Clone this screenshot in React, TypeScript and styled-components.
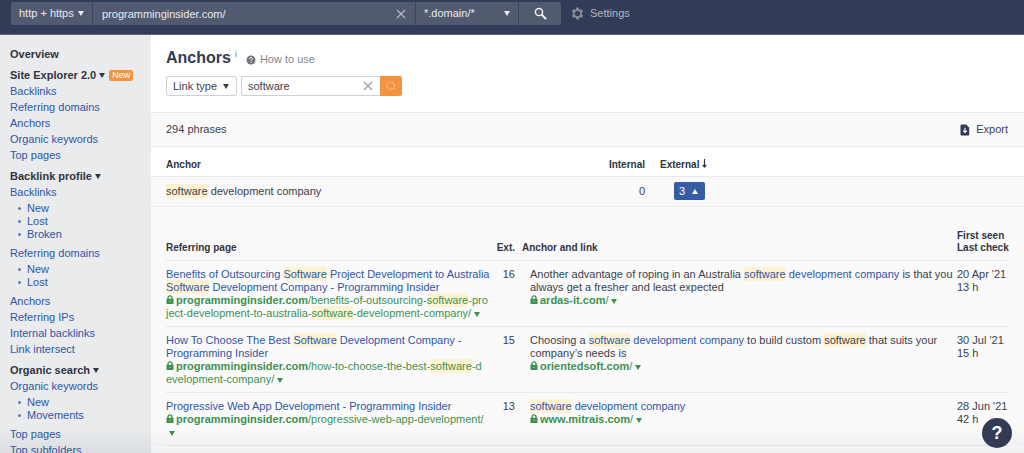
import React from "react";
import styled, { createGlobalStyle } from "styled-components";

const Global = createGlobalStyle`
  *, *::before, *::after { box-sizing: border-box; }
  body {
    margin: 0;
    font-family: "Liberation Sans", Arial, Helvetica, sans-serif;
    font-size: 11px;
    line-height: 13px;
    color: #3b3f4a;
    background: #ffffff;
  }
  button, input, select { font: inherit; color: inherit; margin: 0; }
`;

const Shell = styled.div`
  height: 100vh;
  overflow: hidden;
  display: flex;
  flex-direction: column;
`;

const TopBar = styled.header`
  flex: none;
  display: flex;
  align-items: flex-start;
  height: 35px;
  padding: 2px 11px 0;
  background: #333c56;
  border-bottom: 1px solid #5b6173;
  color: #e8e9ee;
`;

const UrlForm = styled.form`
  display: flex;
  gap: 1px;
  height: 23px;
  width: 550px;
  background: #3d455d;
  border-radius: 2px;
  overflow: hidden;
`;

const SelectBox = styled.span<{ $width: number }>`
  display: grid;
  align-items: center;
  flex: none;
  width: ${(p) => p.$width}px;
  height: 100%;
  > * { grid-area: 1 / 1; }
  > svg { justify-self: end; margin-right: 8px; pointer-events: none; }
`;

const TopSelect = styled.select`
  appearance: none;
  width: 100%;
  height: 100%;
  padding: 0 8px;
  border: 0;
  border-radius: 0;
  background: #525a70;
  color: #e8e9ee;
`;

const InputWrap = styled.span`
  flex: 1;
  display: flex;
  align-items: center;
  min-width: 0;
  padding-right: 9px;
  background: #525a70;
`;

const TextInput = styled.input`
  flex: 1;
  min-width: 0;
  height: 100%;
  padding: 0 9px;
  border: 0;
  background: transparent;
  outline: none;
`;

const IconButton = styled.button`
  display: flex;
  align-items: center;
  justify-content: center;
  padding: 0;
  border: 0;
  background: transparent;
`;

const UrlSubmit = styled(IconButton)`
  flex: none;
  width: 42px;
  background: #525a70;
`;

const SettingsButton = styled(IconButton)`
  gap: 6px;
  height: 23px;
  margin-left: 10px;
  color: #b4b7c0;
`;

const Body = styled.div`
  flex: 1;
  min-height: 0;
  display: flex;
`;

const Sidebar = styled.nav`
  flex: none;
  width: 151px;
  padding: 11px 10px 0;
  background: #e9ebed;
  overflow: hidden;
`;

const Overview = styled.a`
  display: block;
  margin-bottom: 5px;
  font-weight: bold;
  line-height: 16px;
  color: #2f3441;
  text-decoration: none;
`;

const GroupTitle = styled.button`
  display: flex;
  align-items: center;
  gap: 3px;
  height: 16px;
  padding: 0;
  border: 0;
  background: none;
  font-weight: bold;
  line-height: 16px;
  color: #2f3441;
  white-space: nowrap;
`;

const Badge = styled.span`
  margin-left: 1px;
  padding: 0 3px;
  border-radius: 2px;
  background: #f39540;
  color: #ffffff;
  font-size: 9px;
  font-weight: normal;
  line-height: 11px;
`;

const NavList = styled.ul`
  list-style: none;
  margin: 0 0 5px;
  padding: 0;
  line-height: 16px;
`;

const SubList = styled.ul`
  list-style: none;
  margin: 0;
  padding: 2px 0 4px 8px;
  line-height: 13px;
  li { display: flex; align-items: center; gap: 6px; }
  li::before {
    content: "";
    width: 3px;
    height: 3px;
    border-radius: 2px;
    background: #5d7ab8;
  }
`;

const Link = styled.a`
  color: #2f55a6;
  text-decoration: none;
  white-space: nowrap;
`;

const Main = styled.main`
  flex: 1;
  min-width: 0;
`;

const Intro = styled.section`
  height: 78px;
  padding: 13px 15px 0;
  border-bottom: 1px solid #e9e9ea;
`;

const TitleRow = styled.div`
  display: flex;
  align-items: center;
  gap: 9px;
  height: 20px;
`;

const Title = styled.h1`
  margin: 0;
  font-size: 16px;
  line-height: 20px;
  color: #333b52;
  sup {
    margin-left: 4px;
    font-size: 9px;
    font-weight: normal;
    line-height: 1px;
    color: #777c88;
  }
`;

const HelpLink = styled.a`
  display: flex;
  align-items: center;
  gap: 4px;
  padding-top: 3px;
  color: #85878c;
  text-decoration: none;
`;

const FilterForm = styled.form`
  display: flex;
  gap: 4px;
  height: 20px;
  margin-top: 8px;
`;

const FilterSelect = styled.select`
  appearance: none;
  width: 100%;
  height: 100%;
  padding: 0 6px;
  border: 1px solid #cfd1d4;
  border-radius: 2px;
  background: #ffffff;
`;

const SearchBox = styled.span`
  display: flex;
  align-items: center;
  width: 139px;
  border: 1px solid #cfd1d4;
  border-right: 0;
  border-radius: 2px 0 0 2px;
  input { padding: 0 6px; }
`;

const SearchClear = styled(IconButton)`
  flex: none;
  width: 24px;
`;

const SearchSubmit = styled(IconButton)`
  width: 22px;
  border-radius: 0 2px 2px 0;
  background: #f39540;
`;

const SearchGroup = styled.span`
  display: flex;
`;

const Summary = styled.section`
  display: flex;
  align-items: center;
  justify-content: space-between;
  height: 34px;
  padding: 0 16px 0 15px;
  border-bottom: 1px solid #e9e9ea;
  background: #f9f9f9;
`;

const ExportButton = styled(IconButton)`
  gap: 6px;
`;

const AnchorTable = styled.table`
  width: 100%;
  table-layout: fixed;
  border-collapse: collapse;
`;

const AnchorTh = styled.th<{ $right?: boolean }>`
  height: 29px;
  padding: 7px 0 0 15px;
  border-bottom: 1px solid #e9e9ea;
  font-size: 10px;
  text-align: ${(p) => (p.$right ? "right" : "left")};
  color: #2f3441;
  white-space: nowrap;
`;

const AnchorTd = styled.td<{ $right?: boolean }>`
  height: 30px;
  padding: 0 0 0 15px;
  border-bottom: 1px solid #e9e9ea;
  background: #f9f9f9;
  text-align: ${(p) => (p.$right ? "right" : "left")};
`;

const NestedTd = styled.td`
  padding: 23px 16px 0 15px;
  background: #fafafa;
`;

const CountButton = styled.button`
  display: flex;
  align-items: center;
  justify-content: space-between;
  width: 31px;
  height: 18px;
  margin-left: auto;
  padding: 0 7px 0 5px;
  border: 0;
  border-radius: 2px;
  background: #375ca6;
  color: #ffffff;
`;

const RefTable = styled.table`
  width: 100%;
  table-layout: fixed;
  border-collapse: collapse;
`;

const RefTh = styled.th<{ $right?: boolean; $indent?: number }>`
  padding: 0 0 6px ${(p) => p.$indent ?? 0}px;
  border-bottom: 1px solid #e9e9ea;
  font-size: 10px;
  line-height: 12px;
  text-align: ${(p) => (p.$right ? "right" : "left")};
  vertical-align: bottom;
  color: #2f3441;
  white-space: nowrap;
`;

const RefTd = styled.td<{ $right?: boolean; $indent?: number }>`
  padding: 7px 0 6px ${(p) => p.$indent ?? 0}px;
  border-bottom: 1px solid #e9e9ea;
  text-align: ${(p) => (p.$right ? "right" : "left")};
  vertical-align: top;
  white-space: nowrap;
`;

const Url = styled.a`
  color: #3f9150;
  text-decoration: none;
  svg:first-child { margin-right: 2px; }
`;

const CaretButton = styled.button`
  padding: 0 0 0 3px;
  border: 0;
  background: none;
  color: #3f9150;
  line-height: 12px;
`;

const Mark = styled.mark`
  padding: 1px 0;
  background: #fdf3d0;
  color: inherit;
`;

const BottomFade = styled.div`
  position: fixed;
  left: 0;
  right: 0;
  bottom: 0;
  height: 24px;
  background: linear-gradient(to bottom, rgba(60, 70, 100, 0), rgba(60, 70, 100, 0.08));
  pointer-events: none;
`;

const HelpBubble = styled.button`
  position: fixed;
  right: 12px;
  bottom: 5px;
  display: flex;
  align-items: center;
  justify-content: center;
  width: 30px;
  height: 30px;
  padding: 0;
  border: 0;
  border-radius: 50%;
  background: #333b54;
  color: #ffffff;
  font-size: 18px;
  font-weight: bold;
  line-height: 30px;
`;

const Caret = ({ up = false }: { up?: boolean }) => (
  <svg width="6" height="5" viewBox="0 0 6 5" aria-hidden="true">
    <path d={up ? "M0 5 3 0 6 5Z" : "M0 0H6L3 5Z"} fill="currentColor" />
  </svg>
);

const Cross = ({ color }: { color: string }) => (
  <svg width="10" height="10" viewBox="0 0 10 10" aria-hidden="true">
    <path d="M1 1 9 9M9 1 1 9" stroke={color} strokeWidth="1.1" fill="none" />
  </svg>
);

const Lock = () => (
  <svg width="8" height="9" viewBox="0 0 8 9" aria-hidden="true">
    <path d="M2 4.5V2.8a2 2 0 0 1 4 0v1.7" fill="none" stroke="currentColor" strokeWidth="1.3" />
    <rect x="0.5" y="3.7" width="7" height="5.3" rx="0.6" fill="currentColor" />
    <path d="M4 5.6v1.4" stroke="#fafafa" strokeWidth="0.6" />
  </svg>
);

const Magnifier = () => (
  <svg width="13" height="13" viewBox="0 0 13 13" fill="none" stroke="#f2f3f6" aria-hidden="true">
    <circle cx="5" cy="5" r="3.6" strokeWidth="1.5" />
    <path d="M7.7 7.7 12 12" strokeWidth="2" />
  </svg>
);

const Gear = () => (
  <svg width="13" height="13" viewBox="0 0 24 24" fill="#858a97" aria-hidden="true">
    <path
      fillRule="evenodd"
      d="M9.600 1h4.800l.6 3.200 1.900 1.100 3.100-1.100 2.400 4.200-2.500 2.100v3l2.500 2.100-2.400 4.200-3.100-1.100-1.900 1.100-.6 3.200H9.600L9 19.800l-1.900-1.100L4 19.800l-2.400-4.200 2.500-2.100v-3L1.600 8.400 4 4.200l3.100 1.100L9 4.200ZM12 7.200a4.800 4.800 0 1 0 0 9.600 4.800 4.800 0 0 0 0-9.600Z"
    />
  </svg>
);

const Spinner = () => (
  <svg width="10" height="10" viewBox="0 0 10 10" fill="none" stroke="#fdebd8" aria-hidden="true">
    <circle cx="4.600" cy="4.600" r="3.700" strokeDasharray="1.100 1.225" />
    <path d="M7.500 7.500 8.600 8.600" />
  </svg>
);

const Question = () => (
  <svg width="10" height="10" viewBox="0 0 10 10" aria-hidden="true">
    <circle cx="5" cy="5" r="4.5" fill="#74767b" />
    <path d="M3.6 4a1.4 1.4 0 1 1 2 1.2c-.5.3-.6.4-.6.9M5 7v.9" fill="none" stroke="#fff" strokeWidth="0.9" />
  </svg>
);

const ExportIcon = () => (
  <svg width="10" height="12" viewBox="0 0 10 12" aria-hidden="true">
    <path d="M1.5.5H6L9.200 3.500V10.500a1 1 0 0 1-1 1H1.500a1 1 0 0 1-1-1V1.500a1 1 0 0 1 1-1Z" fill="#333b54" />
    <path d="M5 3.800V8M3.200 6.600 5 8.500 6.800 6.600" fill="none" stroke="#fff" strokeWidth="1.1" />
  </svg>
);

const SortArrow = () => (
  <svg width="5" height="9" viewBox="0 0 5 9" aria-hidden="true">
    <path d="M2.500 0V8M.6 5.900 2.500 8 4.400 5.900" fill="none" stroke="#2f3441" strokeWidth="1.2" />
  </svg>
);

type NavItem = { label: string; children?: string[] };
type NavGroup = { title: string; isNew?: boolean; items: NavItem[] };

const groups: NavGroup[] = [
  {
    title: "Site Explorer 2.0",
    isNew: true,
    items: ["Backlinks", "Referring domains", "Anchors", "Organic keywords", "Top pages"].map((label) => ({ label })),
  },
  {
    title: "Backlink profile",
    items: [
      { label: "Backlinks", children: ["New", "Lost", "Broken"] },
      { label: "Referring domains", children: ["New", "Lost"] },
      { label: "Anchors" },
      { label: "Referring IPs" },
      { label: "Internal backlinks" },
      { label: "Link intersect" },
    ],
  },
  {
    title: "Organic search",
    items: [
      { label: "Organic keywords", children: ["New", "Movements"] },
      { label: "Top pages" },
      { label: "Top subfolders" },
    ],
  },
];

/* Wraps each occurrence of the search term and keeps the line breaks of the text. */
const Highlighted = ({ text }: { text: string }) => (
  <>
    {text.split(/(software|\n)/i).map((part, i) => {
      if (part === "\n") return <br key={i} />;
      return /^software$/i.test(part) ? <Mark key={i}>{part}</Mark> : part;
    })}
  </>
);

const PageUrl = ({ host, path, caretBelow }: { host: string; path: string; caretBelow?: boolean }) => (
  <>
    <Url href="#">
      <Lock />
      <b>{host}</b>
      <Highlighted text={path} />
    </Url>
    {caretBelow && <br />}
    <CaretButton type="button" aria-label={`Options for ${host}`}>
      <Caret />
    </CaretButton>
  </>
);

const rows = [
  {
    title: "Benefits of Outsourcing Software Project Development to Australia\nSoftware Development Company - Programming Insider",
    path: "/benefits-of-outsourcing-software-pro\nject-development-to-australia-software-development-company/",
    ext: 16,
    before: "Another advantage of roping in an Australia ",
    after: " is that you\nalways get a fresher and least expected",
    target: "ardas-it.com",
    seen: "20 Apr '21",
    checked: "13 h",
  },
  {
    title: "How To Choose The Best Software Development Company -\nProgramming Insider",
    path: "/how-to-choose-the-best-software-d\nevelopment-company/",
    ext: 15,
    before: "Choosing a ",
    after: " to build custom software that suits your\ncompany’s needs is",
    target: "orientedsoft.com",
    seen: "30 Jul '21",
    checked: "15 h",
  },
  {
    title: "Progressive Web App Development - Programming Insider",
    path: "/progressive-web-app-development/",
    caretBelow: true,
    ext: 13,
    before: "",
    after: "",
    target: "www.mitrais.com",
    seen: "28 Jun '21",
    checked: "42 h",
  },
];

export default function App() {
  return (
    <Shell>
      <Global />
      <TopBar>
        <UrlForm onSubmit={(e) => e.preventDefault()}>
          <SelectBox $width={81}>
            <TopSelect aria-label="Protocol">
              <option>http + https</option>
            </TopSelect>
            <Caret />
          </SelectBox>
          <InputWrap>
            <TextInput aria-label="Domain or URL" defaultValue="programminginsider.com/" />
            <IconButton type="button" aria-label="Clear URL">
              <Cross color="#b9bcc5" />
            </IconButton>
          </InputWrap>
          <SelectBox $width={102}>
            <TopSelect aria-label="Mode">
              <option>*.domain/*</option>
            </TopSelect>
            <Caret />
          </SelectBox>
          <UrlSubmit type="submit" aria-label="Search">
            <Magnifier />
          </UrlSubmit>
        </UrlForm>
        <SettingsButton type="button">
          <Gear />
          Settings
        </SettingsButton>
      </TopBar>
      <Body>
        <Sidebar>
          <Overview href="#">Overview</Overview>
          {groups.map((group) => (
            <React.Fragment key={group.title}>
              <GroupTitle type="button">
                {group.title}
                <Caret />
                {group.isNew && <Badge>New</Badge>}
              </GroupTitle>
              <NavList>
                {group.items.map((item) => (
                  <li key={item.label}>
                    <Link href="#">{item.label}</Link>
                    {item.children && (
                      <SubList>
                        {item.children.map((child) => (
                          <li key={child}>
                            <Link href="#">{child}</Link>
                          </li>
                        ))}
                      </SubList>
                    )}
                  </li>
                ))}
              </NavList>
            </React.Fragment>
          ))}
        </Sidebar>
        <Main>
          <Intro>
            <TitleRow>
              <Title>
                Anchors<sup>i</sup>
              </Title>
              <HelpLink href="#">
                <Question />
                How to use
              </HelpLink>
            </TitleRow>
            <FilterForm onSubmit={(e) => e.preventDefault()}>
              <SelectBox $width={71}>
                <FilterSelect aria-label="Link type">
                  <option>Link type</option>
                </FilterSelect>
                <Caret />
              </SelectBox>
              <SearchGroup>
                <SearchBox>
                  <TextInput aria-label="Anchor search" defaultValue="software" />
                  <SearchClear type="button" aria-label="Clear search">
                    <Cross color="#96999f" />
                  </SearchClear>
                </SearchBox>
                <SearchSubmit type="submit" aria-label="Search anchors">
                  <Spinner />
                </SearchSubmit>
              </SearchGroup>
            </FilterForm>
          </Intro>
          <Summary>
            <span>294 phrases</span>
            <ExportButton type="button">
              <ExportIcon />
              Export
            </ExportButton>
          </Summary>
          <AnchorTable>
            <colgroup>
              <col style={{ width: 414 }} />
              <col style={{ width: 80 }} />
              <col style={{ width: 60 }} />
              <col />
            </colgroup>
            <thead>
              <tr>
                <AnchorTh>Anchor</AnchorTh>
                <AnchorTh $right>Internal</AnchorTh>
                <AnchorTh>
                  External <SortArrow />
                </AnchorTh>
                <AnchorTh aria-hidden="true" />
              </tr>
            </thead>
            <tbody>
              <tr>
                <AnchorTd>
                  <Highlighted text="software development company" />
                </AnchorTd>
                <AnchorTd $right>0</AnchorTd>
                <AnchorTd>
                  <CountButton type="button" aria-expanded="true">
                    3<Caret up />
                  </CountButton>
                </AnchorTd>
                <AnchorTd />
              </tr>
              <tr>
                <NestedTd colSpan={4}>
                  <RefTable>
                    <colgroup>
                      <col style={{ width: 327 }} />
                      <col style={{ width: 22 }} />
                      <col />
                      <col style={{ width: 51 }} />
                    </colgroup>
                    <thead>
                      <tr>
                        <RefTh>Referring page</RefTh>
                        <RefTh $right>Ext.</RefTh>
                        <RefTh $indent={7}>Anchor and link</RefTh>
                        <RefTh>
                          First seen
                          <br />
                          Last check
                        </RefTh>
                      </tr>
                    </thead>
                    <tbody>
                      {rows.map((row) => (
                        <tr key={row.ext}>
                          <RefTd>
                            <Link href="#">
                              <Highlighted text={row.title} />
                            </Link>
                            <br />
                            <PageUrl host="programminginsider.com" path={row.path} caretBelow={row.caretBelow} />
                          </RefTd>
                          <RefTd $right>{row.ext}</RefTd>
                          <RefTd $indent={15}>
                            {row.before}
                            <Link href="#">
                              <Highlighted text="software development company" />
                            </Link>
                            <Highlighted text={row.after} />
                            <br />
                            <PageUrl host={row.target} path="/" />
                          </RefTd>
                          <RefTd>
                            {row.seen}
                            <br />
                            {row.checked}
                          </RefTd>
                        </tr>
                      ))}
                    </tbody>
                  </RefTable>
                </NestedTd>
              </tr>
            </tbody>
          </AnchorTable>
        </Main>
      </Body>
      <BottomFade />
      <HelpBubble type="button" aria-label="Help">
        ?
      </HelpBubble>
    </Shell>
  );
}
